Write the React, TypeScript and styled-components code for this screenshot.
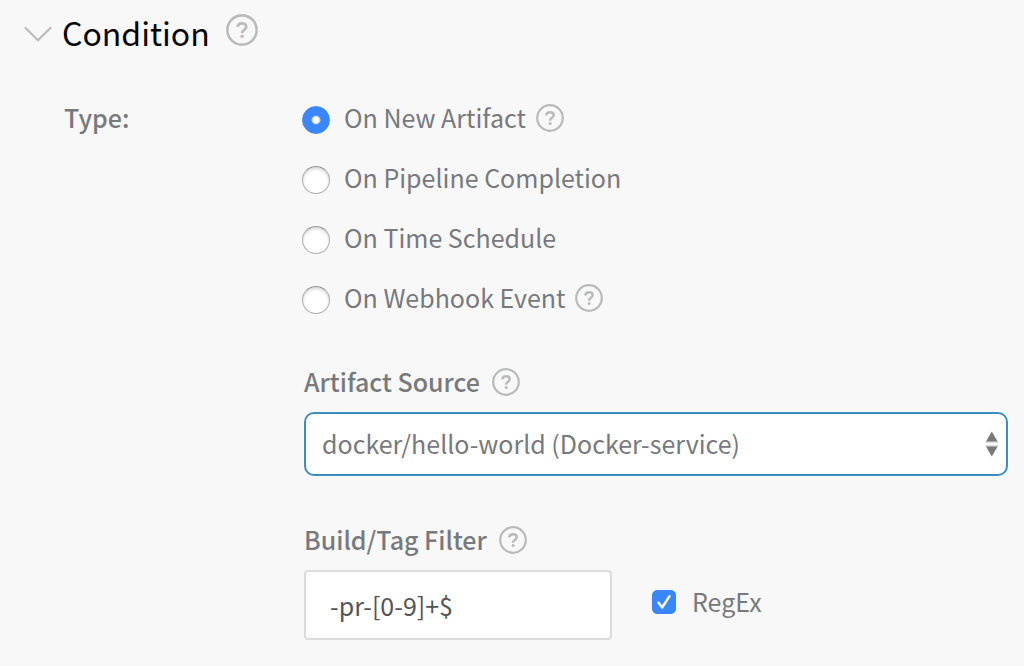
import React, { useState } from "react";
import styled, { createGlobalStyle } from "styled-components";

const GlobalStyle = createGlobalStyle`
  *, *::before, *::after { box-sizing: border-box; }
  body {
    margin: 0;
    background: #f8f8f8;
    color: #77797d;
    font-family: "Noto Sans CJK SC", "Noto Sans", sans-serif;
    font-size: 25px;
    line-height: 38px;
  }
`;

const Page = styled.main`
  padding: 0 16px 24px 24px;
`;

const SectionHeader = styled.header`
  display: flex;
  align-items: flex-start;
  padding: 8px 0 0;
  height: 60px;
`;

const CollapseButton = styled.button`
  display: flex;
  padding: 18px 0 0;
  margin-right: 10px;
  border: 0;
  background: none;
  cursor: pointer;
`;

const Title = styled.h2`
  margin: 0 16px 0 0;
  color: #050505;
  font-size: 32px;
  font-weight: 400;
  line-height: 48px;
`;

const HelpButton = styled.button<{ $size: number }>`
  display: flex;
  flex: none;
  width: ${(p) => p.$size}px;
  height: ${(p) => p.$size}px;
  margin-top: 6px;
  padding: 0;
  border: 0;
  background: none;
  cursor: help;
`;

const Form = styled.form`
  display: grid;
  grid-template-columns: 238px minmax(0, 1fr);
  padding: 38px 0 0 40px;
`;

const TypeLabel = styled.div`
  font-weight: 500;
`;

const RadioList = styled.div`
  display: flex;
  flex-direction: column;
  gap: 22px;
  padding-bottom: 2px;
`;

const OptionRow = styled.div`
  display: flex;
  align-items: flex-start;
  gap: 10px;
`;

const OptionLabel = styled.label`
  display: flex;
  align-items: flex-start;
  gap: 14px;
`;

const Radio = styled.input`
  appearance: none;
  flex: none;
  width: 28px;
  height: 28px;
  margin: 8px 0 0;
  border: 1px solid #aeaeae;
  border-top-color: #969696;
  border-radius: 50%;
  background: #fff;
  box-shadow: inset 0 2px 3px rgba(0, 0, 0, 0.16);
  &:checked {
    border-color: #3a87fd;
    background: radial-gradient(circle, #fff 0 3px, #3a87fd 5px);
    box-shadow: none;
  }
`;

const Field = styled.div`
  padding: 44px 0 0 2px;
`;

const FieldHeading = styled.div`
  display: flex;
  align-items: flex-start;
  gap: 12px;
  height: 50px;
  font-weight: 500;
`;

const SelectBox = styled.div`
  display: grid;
  align-items: center;
  & > * { grid-area: 1 / 1; }
  & > svg { justify-self: end; margin-right: 9px; pointer-events: none; }
`;

const Select = styled.select`
  appearance: none;
  width: 100%;
  height: 64px;
  padding: 0 40px 2px 16px;
  border: 2px solid #3b8ebf;
  border-radius: 10px;
  outline: 0;
  background: #fff;
  color: #77797d;
  font: inherit;
`;

const FilterRow = styled.div`
  display: flex;
  align-items: flex-start;
  gap: 40px;
`;

const TextInput = styled.input`
  width: 308px;
  height: 70px;
  padding: 0 24px;
  border: 2px solid #dcdcdc;
  border-radius: 4px;
  background: #fff;
  color: #555;
  font: inherit;
`;

const CheckLabel = styled.label`
  display: flex;
  align-items: flex-start;
  gap: 16px;
  padding-top: 12px;
`;

const CheckBox = styled.span`
  display: grid;
  margin-top: 8px;
  & > * { grid-area: 1 / 1; }
  & > svg { pointer-events: none; }
  & > input:not(:checked) + svg { visibility: hidden; }
`;

const CheckInput = styled.input`
  appearance: none;
  width: 24px;
  height: 24px;
  margin: 0;
  border: 1px solid #aeaeae;
  border-radius: 5px;
  background: #fff;
  &:checked {
    border-color: #3a87fd;
    background: #3a87fd;
  }
`;

function Help({ topic, size = 28 }: { topic: string; size?: number }) {
  return (
    <HelpButton type="button" $size={size} aria-label={`Help: ${topic}`}>
      <svg width={size} height={size} viewBox="0 0 28 28" fill="none" stroke="#b9baba">
        <circle cx="14" cy="14" r="12.8" strokeWidth="2.2" />
        <path d="M10.2 11.3C10.5 9.2 12 8.2 14 8.2c2.2 0 3.7 1.1 3.7 2.9 0 1.5-.9 2.2-2 3-1.1.7-1.6 1.2-1.6 2.6" strokeWidth="2.4" />
        <circle cx="14.1" cy="19.4" r="1.5" fill="#b9baba" stroke="none" />
      </svg>
    </HelpButton>
  );
}

const options = [
  { id: "artifact", label: "On New Artifact", help: true },
  { id: "pipeline", label: "On Pipeline Completion", help: false },
  { id: "schedule", label: "On Time Schedule", help: false },
  { id: "webhook", label: "On Webhook Event", help: true },
];

export default function App() {
  const [type, setType] = useState("artifact");
  const [filter, setFilter] = useState("-pr-[0-9]+$");
  const [regex, setRegex] = useState(true);

  return (
    <Page>
      <GlobalStyle />
      <SectionHeader>
        <CollapseButton type="button" aria-label="Collapse section">
          <svg width="28" height="16" viewBox="0 0 28 16" fill="none" stroke="#b9baba" strokeWidth="2">
            <path d="M.8 1.2 14 14.3 27.2 1.2" />
          </svg>
        </CollapseButton>
        <Title>Condition</Title>
        <Help topic="Condition" size={32} />
      </SectionHeader>

      <Form>
        <TypeLabel id="type-label">Type:</TypeLabel>
        <div>
          <RadioList role="radiogroup" aria-labelledby="type-label">
            {options.map((o) => (
              <OptionRow key={o.id}>
                <OptionLabel>
                  <Radio type="radio" name="type" checked={type === o.id} onChange={() => setType(o.id)} />
                  {o.label}
                </OptionLabel>
                {o.help && <Help topic={o.label} />}
              </OptionRow>
            ))}
          </RadioList>

          <Field>
            <FieldHeading>
              <label htmlFor="source">Artifact Source</label>
              <Help topic="Artifact Source" />
            </FieldHeading>
            <SelectBox>
              <Select id="source">
                <option>docker/hello-world (Docker-service)</option>
              </Select>
              <svg width="14" height="26" viewBox="0 0 14 26" fill="#77797d">
                <path d="M.5 10.5h12.6v1H.5zM.5 14.5h12.6v1H.5z" fill="#bcbdbf" />
                <path d="M6.8 .5 12.6 10.5H1zM1 15.5h11.6L6.8 25.5z" />
              </svg>
            </SelectBox>
          </Field>

          <Field>
            <FieldHeading>
              <label htmlFor="filter">Build/Tag Filter</label>
              <Help topic="Build/Tag Filter" />
            </FieldHeading>
            <FilterRow>
              <TextInput id="filter" type="text" value={filter} onChange={(e) => setFilter(e.target.value)} />
              <CheckLabel>
                <CheckBox>
                  <CheckInput type="checkbox" checked={regex} onChange={(e) => setRegex(e.target.checked)} />
                  <svg width="24" height="24" viewBox="0 0 24 24" fill="none" stroke="#fff" strokeWidth="2.6" strokeLinecap="round" strokeLinejoin="round">
                    <path d="M6.5 12.8 10.2 17.4 17.4 6.4" />
                  </svg>
                </CheckBox>
                RegEx
              </CheckLabel>
            </FilterRow>
          </Field>
        </div>
      </Form>
    </Page>
  );
}
